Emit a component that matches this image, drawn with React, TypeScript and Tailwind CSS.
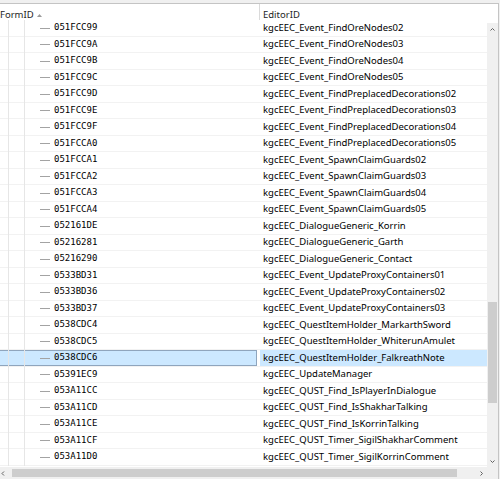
import React from "react";

const records: [string, string][] = [
  ["051FCC99", "kgcEEC_Event_FindOreNodes02"],
  ["051FCC9A", "kgcEEC_Event_FindOreNodes03"],
  ["051FCC9B", "kgcEEC_Event_FindOreNodes04"],
  ["051FCC9C", "kgcEEC_Event_FindOreNodes05"],
  ["051FCC9D", "kgcEEC_Event_FindPreplacedDecorations02"],
  ["051FCC9E", "kgcEEC_Event_FindPreplacedDecorations03"],
  ["051FCC9F", "kgcEEC_Event_FindPreplacedDecorations04"],
  ["051FCCA0", "kgcEEC_Event_FindPreplacedDecorations05"],
  ["051FCCA1", "kgcEEC_Event_SpawnClaimGuards02"],
  ["051FCCA2", "kgcEEC_Event_SpawnClaimGuards03"],
  ["051FCCA3", "kgcEEC_Event_SpawnClaimGuards04"],
  ["051FCCA4", "kgcEEC_Event_SpawnClaimGuards05"],
  ["052161DE", "kgcEEC_DialogueGeneric_Korrin"],
  ["05216281", "kgcEEC_DialogueGeneric_Garth"],
  ["05216290", "kgcEEC_DialogueGeneric_Contact"],
  ["0533BD31", "kgcEEC_Event_UpdateProxyContainers01"],
  ["0533BD36", "kgcEEC_Event_UpdateProxyContainers02"],
  ["0533BD37", "kgcEEC_Event_UpdateProxyContainers03"],
  ["0538CDC4", "kgcEEC_QuestItemHolder_MarkarthSword"],
  ["0538CDC5", "kgcEEC_QuestItemHolder_WhiterunAmulet"],
  ["0538CDC6", "kgcEEC_QuestItemHolder_FalkreathNote"],
  ["05391EC9", "kgcEEC_UpdateManager"],
  ["053A11CC", "kgcEEC_QUST_Find_IsPlayerInDialogue"],
  ["053A11CD", "kgcEEC_QUST_Find_IsShakharTalking"],
  ["053A11CE", "kgcEEC_QUST_Find_IsKorrinTalking"],
  ["053A11CF", "kgcEEC_QUST_Timer_SigilShakharComment"],
  ["053A11D0", "kgcEEC_QUST_Timer_SigilKorrinComment"],
];

const SELECTED = 20;

const uiFont = "font-['Noto_Sans',sans-serif]";
const monoFont = "font-['DejaVu_Sans_Mono',monospace]";

function Chevron({ dir }: { dir: "up" | "down" | "left" | "right" }) {
  const pts = {
    up: "0.5,3.5 2.5,1.5 4.5,3.5",
    down: "0.5,1.5 2.5,3.5 4.5,1.5",
    left: "3,0.5 1,2.5 3,4.5",
    right: "1.5,0.5 3.5,2.5 1.5,4.5",
  }[dir];
  return (
    <svg width="5" height="5" viewBox="0 0 5 5">
      <polyline points={pts} fill="none" stroke="#606060" strokeWidth="1" />
    </svg>
  );
}

function GuideLine() {
  return (
    <div className="w-[16px] shrink-0 pl-[8px]">
      <div className="w-px h-[calc(100%+1px)] bg-[#e6e6e6]" />
    </div>
  );
}

function Branch({ last }: { last: boolean }) {
  return (
    <div className="flex w-[16px] shrink-0 pl-[8px]">
      <div className={`flex flex-col w-px ${last ? "h-full" : "h-[calc(100%+1px)]"}`}>
        <div className="flex-1 bg-[#a3a3a3]" />
        <div className={last ? "flex-1" : "flex-1 bg-[#a3a3a3]"} />
      </div>
      <div className="flex items-center">
        <div className="w-[10px] h-px bg-[#a3a3a3]" />
      </div>
    </div>
  );
}

function Row({ id, editorId, index }: { id: string; editorId: string; index: number }) {
  const selected = index === SELECTED;
  const last = index === records.length - 1;
  return (
    <div
      className={`flex border-b border-[#f2f2f2] ${index % 2 === 0 ? "h-[17px]" : "h-[16px]"}`}
    >
      <div
        className={`flex w-[257px] shrink-0 ${
          selected
            ? "bg-[#cce8ff] shadow-[inset_-1px_0_0_#8fa5bd,inset_0_1px_0_#8fa5bd,inset_0_-1px_0_#8fa5bd]"
            : ""
        }`}
      >
        <GuideLine />
        <GuideLine />
        <Branch last={last} />
        <span className={`flex items-center pl-[6px] text-[9px] text-black ${monoFont}`}>{id}</span>
      </div>
      <div className="w-[3px] shrink-0" />
      <div
        className={`flex flex-1 items-center pl-[3px] text-[9.5px] text-black whitespace-nowrap ${uiFont} ${
          selected ? "bg-[#cce8ff]" : ""
        }`}
      >
        {editorId}
      </div>
    </div>
  );
}

export default function App() {
  return (
    <div className="w-[500px] h-[479px] overflow-hidden bg-[#f0f0f0] pt-[3px] pr-[1px]">
      <div className="flex flex-col h-[476px] bg-white border-t border-r border-[#c4c4c4]">
        <div className="flex flex-1 min-h-0">
          <div className="flex flex-col flex-1 min-w-0">
            {/* column header */}
            <div className={`flex h-[16px] shrink-0 text-[9.5px] text-[#1e1e1e] ${uiFont}`}>
              <div className="flex items-center w-[260px] shrink-0 pt-[7px] border-r border-[#dadada]">
                <span>FormID</span>
                <svg width="5" height="3" viewBox="0 0 5 3" className="ml-[3px] mb-[1px]">
                  <polygon points="0,3 2.5,0 5,3" fill="#9a9a9a" />
                </svg>
              </div>
              <div className="flex items-center pl-[3px] pt-[7px]">EditorID</div>
            </div>
            {/* record rows */}
            <div className="flex-1 min-h-0 overflow-hidden">
              {records.map(([id, editorId], i) => (
                <Row key={id} id={id} editorId={editorId} index={i} />
              ))}
            </div>
          </div>
          {/* vertical scrollbar */}
          <div className="flex flex-col w-[11px] shrink-0">
            <div className="h-[19px] bg-white" />
            <div className="flex flex-col flex-1 min-h-0 bg-[#f0f0f0]">
              <div className="flex items-center justify-center h-[12px]">
                <Chevron dir="up" />
              </div>
              <div className="flex-1 min-h-0">
                <div className="mt-[267px] mx-[1px] w-[9px] h-[101px] bg-[#cdcdcd]" />
              </div>
              <div className="flex items-center justify-center h-[12px]">
                <Chevron dir="down" />
              </div>
            </div>
          </div>
        </div>
        {/* horizontal scrollbar */}
        <div className="flex h-[12px] shrink-0">
          <div className="flex flex-1 bg-[#f0f0f0]">
            <div className="flex items-center w-[8px] pl-[1px]">
              <Chevron dir="left" />
            </div>
            <div className="ml-[4px] my-[2px] w-[445px] bg-[#cdcdcd]" />
            <div className="flex-1" />
            <div className="flex items-center justify-center w-[11px]">
              <Chevron dir="right" />
            </div>
          </div>
          <div className="w-[11px] bg-[#f0f0f0]" />
        </div>
      </div>
    </div>
  );
}
